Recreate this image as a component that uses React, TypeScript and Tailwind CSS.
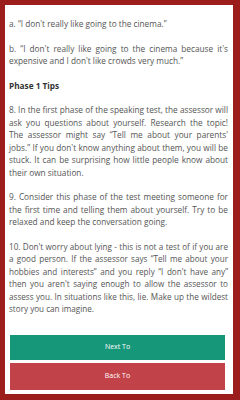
import React from "react";

const paras: string[] = [
  "a. \u201cI don't really like going to the cinema.\u201d",
  "b. \u201cI don't really like going to the cinema because it's expensive and I don't like crowds very much.\u201d",
];

const tips: string[] = [
  "8. In the first phase of the speaking test, the assessor will ask you questions about yourself. Research the topic! The assessor might say \u201cTell me about your parents' jobs.\u201d If you don't know anything about them, you will be stuck. It can be surprising how little people know about their own situation.",
  "9. Consider this phase of the test meeting someone for the first time and telling them about yourself. Try to be relaxed and keep the conversation going.",
];

const last =
  "10. Don't worry about lying - this is not a test of if you are a good person. If the assessor says \u201cTell me about your hobbies and interests\u201d and you reply \u201cI don't have any\u201d then you aren't saying enough to allow the assessor to assess you. In situations like this, lie. Make up the wildest story you can imagine.";

export default function App() {
  return (
    <div className="w-[240px] h-[400px] bg-[#9c1e1c] pt-[5px] pl-[5px] pr-[7px] pb-[6px]">
      <div
        className="h-full bg-white flex flex-col"
        style={{ fontFamily: '"Open Sans", "Noto Sans", sans-serif' }}
      >
        <div className="pl-[4px] pr-[5px] pt-[13px] text-[8.25px] leading-[12.5px] text-[#555] flex flex-col gap-[12px] flex-1">
          {paras.map((p, i) => (
            <p key={i} className="text-justify">{p}</p>
          ))}
          <p className="font-bold text-[#333]">Phase 1 Tips</p>
          {tips.map((p, i) => (
            <p key={i} className="text-justify">{p}</p>
          ))}
          <p className="text-justify text-[8.15px]">{last}</p>
        </div>
        <div className="pl-[5px] pr-[8px] pb-[4px] flex flex-col gap-[3px]">
          <button className="h-[25px] w-full bg-[#16977a] text-white text-[7px]">Next To</button>
          <button className="h-[27px] w-full bg-[#c2424a] text-white text-[7px]">Back To</button>
        </div>
      </div>
    </div>
  );
}
